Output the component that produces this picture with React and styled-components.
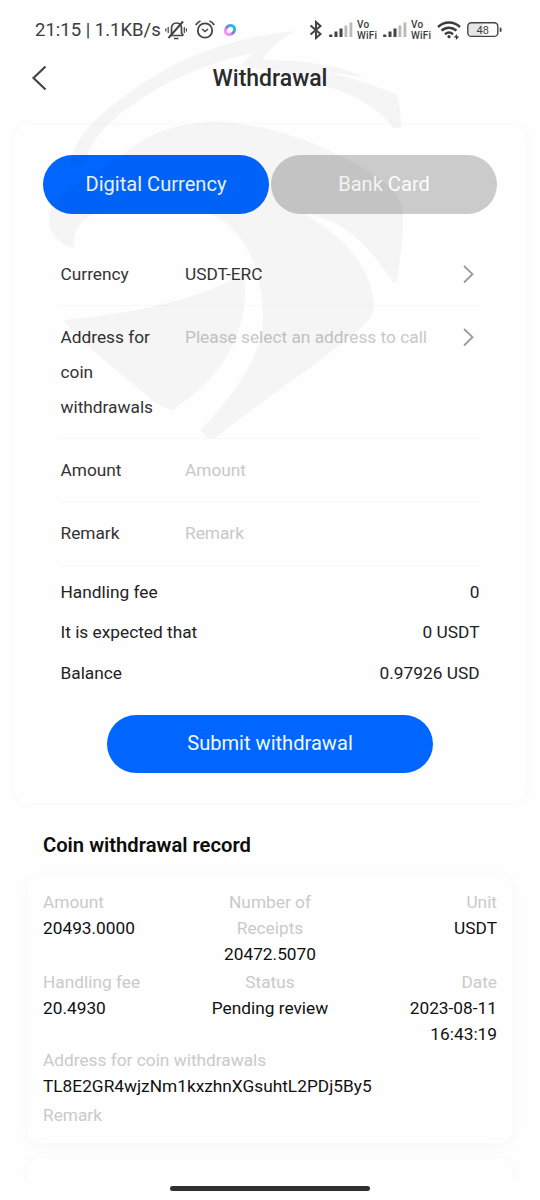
import styled, { createGlobalStyle } from 'styled-components'

const GlobalStyle = createGlobalStyle`
    * {
        box-sizing: border-box;
    }

    body {
        margin: 0;
        background: #fefefe;
        font-family: Roboto, "Liberation Sans", sans-serif;
        color: #111;
    }

    p, h1, h2 {
        margin: 0;
    }
`

const Screen = styled.div`
    position: relative;
    display: flex;
    flex-direction: column;
    width: 540px;
    height: 1200px;
    overflow: hidden;
`

const Watermark = styled.svg`
    position: absolute;
    top: 0;
    left: 0;
    pointer-events: none;
    fill: rgba(0, 0, 0, 0.036);
`

const StatusBar = styled.div`
    display: flex;
    align-items: center;
    flex: none;
    height: 58px;
    padding: 2px 38px 0 35px;
    color: #3c3c3c;

    svg {
        display: block;
        flex: none;
    }
`

const Clock = styled.span`
    width: 130px;
    font-size: 18.5px;
    white-space: nowrap;
`

const Notifications = styled.div`
    display: flex;
    align-items: center;
    gap: 8px;
`

const Indicators = styled.div`
    display: flex;
    align-items: center;
    margin-left: auto;

    svg:first-child {
        margin-right: 6px;
    }

    svg:last-child {
        margin-left: 6px;
    }
`

const VoWifi = styled.span`
    width: 21px;
    margin: 0 5px 0 4px;
    font-size: 10px;
    font-weight: 500;
    letter-spacing: 0.2px;
    line-height: 11px;
`

const Header = styled.header`
    display: grid;
    grid-template-columns: 60px 1fr 60px;
    align-items: center;
    flex: none;
    height: 40px;

    svg {
        margin-left: 30px;
    }
`

const Title = styled.h1`
    color: #2b2b2b;
    font-size: 23px;
    font-weight: 500;
    text-align: center;
`

const Card = styled.section`
    flex: none;
    height: 678px;
    margin: 27px 14px 0;
    padding: 30px 29px 0;
    border-radius: 14px;
    box-shadow: 0 0 10px rgba(0, 0, 0, 0.03);
`

const Tabs = styled.div`
    display: grid;
    grid-template-columns: 226px 226px;
    gap: 2px;
`

const Pill = styled.button`
    display: block;
    width: ${props => props.$width || '100%'};
    height: ${props => props.$height || '59px'};
    padding: 0 0 2px;
    border: 0;
    border-radius: 30px;
    background: ${props => props.$muted ? '#cbcbcb' : '#0066ff'};
    color: ${props => props.$muted ? '#fcfcfc' : '#effaff'};
    font-family: inherit;
    font-size: 20.1px;
`

const Form = styled.div`
    margin: 28px 17.5px 0;
`

const Field = styled.div`
    display: grid;
    grid-template-columns: 124.5px 1fr 18px;
    align-items: start;
    height: ${props => props.$height}px;
    padding-top: 14.4px;
    border-bottom: 1px solid #f7f7f7;
    font-size: 17.3px;
    line-height: 34.6px;

    &:first-child {
        padding-top: 15px;
    }

    svg {
        margin: 7px 0 0 0.5px;
    }
`

const Label = styled.span`
    width: 110px;
    color: #333;
`

const Value = styled.span`
    color: ${props => props.$empty ? '#c8c8c8' : '#333'};
    white-space: nowrap;
`

const Totals = styled.div`
    padding-top: 6px;
`

const Total = styled.div`
    display: flex;
    justify-content: space-between;
    height: 40.4px;
    color: #222;
    font-size: 17.3px;
    line-height: 40px;
`

const SubmitRow = styled.div`
    display: flex;
    justify-content: center;
    margin-top: 22.3px;
`

const RecordTitle = styled.h2`
    flex: none;
    height: 30px;
    margin: 27px 43px 0;
    color: #0c0c0c;
    font-size: 20.2px;
    font-weight: 600;
    line-height: 30px;
`

const Record = styled.section`
    flex: none;
    height: 268px;
    margin: 15px 28px 0;
    padding: 14px 15px 0;
    border-radius: 12px;
    background: #fefefe;
    box-shadow: 0 3px 16px rgba(0, 0, 0, 0.03);
    font-size: 17.3px;
    line-height: 26px;
`

const RecordGrid = styled.div`
    display: grid;
    grid-template-columns: 151px 152px 151px;
    row-gap: 2px;
`

const Cell = styled.div`
    padding: ${props => props.$align === 'center' ? '0 16px' : '0'};
    padding-left: ${props => props.$align === 'right' ? '50px' : ''};
    text-align: ${props => props.$align || 'left'};
`

const Caption = styled.p`
    color: #cacaca;
`

const Data = styled.p`
    color: #111;
`

const Remark = styled(Caption)`
    margin-top: 3px;
`

const HomeBar = styled.div`
    position: absolute;
    bottom: 0;
    left: 0;
    display: flex;
    justify-content: center;
    width: 100%;
    height: 22px;
    padding-top: 8px;
    background: #fefefe;

    &::after {
        content: "";
        width: 200px;
        height: 5px;
        border-radius: 3px;
        background: #303030;
    }
`

const SilentIcon = () => (
    <svg width="22" height="20" viewBox="0 0 22 20" fill="none" stroke="#444" strokeWidth="1.7">
        <path d="M5 15.500h13M6.500 15V8.500C6.500 5 8.500 3 11.500 3s5 2 5 5.500V13l2 2.500M9 18.500h4.500" />
        <path d="M3.500 18L18 1.500" strokeWidth="2" />
        <path d="M3.200 7v6M.8 8.500v3M19.300 7v6M21.400 8.500v3" strokeWidth="1.200" />
    </svg>
)

const AlarmIcon = () => (
    <svg width="20" height="20" viewBox="0 0 20 20" fill="none" stroke="#444" strokeWidth="1.8">
        <circle cx="10" cy="10.500" r="7.200" />
        <path d="M.8 5C2 3 3.500 1.700 5.500 1M19.200 5c-1.200-2-2.700-3.300-4.700-4" />
        <path d="M7 9l3 2.500L13 9" strokeWidth="1.500" />
    </svg>
)

const AppIcon = () => (
    <svg width="14" height="14" viewBox="0 0 14 14" fill="none" strokeWidth="3">
        <defs>
            <linearGradient id="ring" x1="0" y1="0" x2="1" y2="0">
                <stop offset="0.15" stopColor="#ff8df0" />
                <stop offset="0.5" stopColor="#8a6ff0" />
                <stop offset="0.85" stopColor="#25b8ea" />
            </linearGradient>
        </defs>
        <ellipse cx="7" cy="7" rx="5" ry="4.200" stroke="url(#ring)" transform="rotate(-45 7 7)" />
    </svg>
)

const BluetoothIcon = () => (
    <svg width="14" height="20" viewBox="0 0 14 20" fill="none" stroke="#444" strokeWidth="2">
        <path d="M1.500 5.500l10 8.500L7 18V2l4.500 4-10 8.500" />
    </svg>
)

const SignalIcon = () => (
    <svg width="24" height="16" viewBox="0 0 24 16" fill="#444">
        <rect x="0" y="12.500" width="3.500" height="2.500" rx="1" />
        <rect x="5.500" y="9.500" width="3" height="5.500" />
        <rect x="10.500" y="6.500" width="3" height="8.500" />
        <rect x="15.500" y="3.500" width="2.800" height="11.500" fill="#b9b9b9" />
        <rect x="20.500" y="0.500" width="2.800" height="14.500" fill="#b9b9b9" />
    </svg>
)

const WifiIcon = () => (
    <svg width="24" height="19" viewBox="0 0 24 19" fill="none" stroke="#3c3c3c" strokeWidth="2.4">
        <path d="M1 6C7.500 0 16.500 0 23 6M4.500 9.700c4.500-4 10.500-4 15 0M8 13.200c2.500-2 5.500-2 8 0" />
        <circle cx="12" cy="15.700" r="1.600" fill="#3c3c3c" stroke="none" />
        <path d="M17.500 16.500l2-2v3l2-2" strokeWidth="1.200" />
    </svg>
)

const BatteryIcon = () => (
    <svg width="35" height="16" viewBox="0 0 35 16">
        <rect x="1" y="1" width="15" height="13" rx="3" fill="#e6e6e6" />
        <rect x="0.800" y="0.800" width="30" height="13.600" rx="3.500" fill="none" stroke="#444" strokeWidth="1.400" />
        <rect x="32.700" y="5.500" width="1.800" height="4.500" rx="0.900" fill="#444" />
        <text x="15.800" y="11.500" fill="#444" fontSize="11" textAnchor="middle">48</text>
    </svg>
)

const BackIcon = () => (
    <svg width="18" height="26" viewBox="0 0 18 26" fill="none" stroke="#444" strokeWidth="2.2">
        <path d="M15.500 1.500L3.500 13l12 11.500" />
    </svg>
)

const Arrow = () => (
    <svg width="14" height="20" viewBox="0 0 14 20" fill="none" stroke="#999" strokeWidth="1.8">
        <path d="M2 2L10.500 10.200 2 18.500" />
    </svg>
)

// eagle: outer ring and crest, head, beak, neck
const Eagle = () => (
    <Watermark width="540" height="460" viewBox="0 0 540 460">
        <path d="M295 31C240 36 190 53 151 78C112 103 70 135 71 166H86C86 143 108 120 150 93C180 75 216 61 253 53L240 66C270 70 300 74 327 86C355 96 380 108 393 128H401C401 115 400 105 397 95C382 88 368 83 353 79L327 72L363 77C345 67 310 60 263 60C268 49 280 40 295 31Z" />
        <path d="M75 249C55 243 45 228 50 211C62 188 95 176 128 150C150 132 182 122 215 122C263 123 308 139 345 158C382 177 405 194 403 217C403 240 400 262 397 282H393C370 248 345 219 305 214C345 238 369 264 374 303Q374 313 369 320C340 349 290 380 215 438H207L200 430C235 395 263 354 263 317C262 265 243 227 208 213H100C82 218 71 228 75 249Z" />
        <path d="M63 320C125 314 190 303 244 274C252 335 218 380 173 410Q162 408 152 400C120 372 86 348 63 320Z" />
    </Watermark>
)

const fields = [
    { label: 'Currency', value: 'USDT-ERC', height: 64, arrow: true },
    { label: 'Address for coin withdrawals', placeholder: 'Please select an address to call', height: 133, arrow: true },
    { label: 'Amount', placeholder: 'Amount', height: 63 },
    { label: 'Remark', placeholder: 'Remark', height: 64 },
]

const totals = [
    ['Handling fee', '0'],
    ['It is expected that', '0 USDT'],
    ['Balance', '0.97926 USD'],
]

const record = [
    { caption: 'Amount', data: '20493.0000' },
    { caption: 'Number of Receipts', data: '20472.5070', align: 'center' },
    { caption: 'Unit', data: 'USDT', align: 'right' },
    { caption: 'Handling fee', data: '20.4930' },
    { caption: 'Status', data: 'Pending review', align: 'center' },
    { caption: 'Date', data: '2023-08-11 16:43:19', align: 'right' },
]

const App = () => {
    return (
        <>
            <GlobalStyle />
            <Screen>
                <StatusBar>
                    <Clock>21:15 | 1.1KB/s</Clock>
                    <Notifications>
                        <SilentIcon />
                        <AlarmIcon />
                        <AppIcon />
                    </Notifications>
                    <Indicators>
                        <BluetoothIcon />
                        <SignalIcon />
                        <VoWifi>Vo<br />WiFi</VoWifi>
                        <SignalIcon />
                        <VoWifi>Vo<br />WiFi</VoWifi>
                        <WifiIcon />
                        <BatteryIcon />
                    </Indicators>
                </StatusBar>

                <Header>
                    <BackIcon />
                    <Title>Withdrawal</Title>
                </Header>

                <Card>
                    <Tabs>
                        <Pill>Digital Currency</Pill>
                        <Pill $muted>Bank Card</Pill>
                    </Tabs>
                    <Form>
                        {fields.map(field => (
                            <Field key={field.label} $height={field.height}>
                                <Label>{field.label}</Label>
                                <Value $empty={!field.value}>{field.value || field.placeholder}</Value>
                                {field.arrow && <Arrow />}
                            </Field>
                        ))}
                        <Totals>
                            {totals.map(([label, value]) => (
                                <Total key={label}>
                                    <span>{label}</span>
                                    <span>{value}</span>
                                </Total>
                            ))}
                        </Totals>
                    </Form>
                    <SubmitRow>
                        <Pill $width="326px" $height="57.5px">Submit withdrawal</Pill>
                    </SubmitRow>
                </Card>

                <RecordTitle>Coin withdrawal record</RecordTitle>
                <Record>
                    <RecordGrid>
                        {record.map(item => (
                            <Cell key={item.caption} $align={item.align}>
                                <Caption>{item.caption}</Caption>
                                <Data>{item.data}</Data>
                            </Cell>
                        ))}
                    </RecordGrid>
                    <Caption>Address for coin withdrawals</Caption>
                    <Data>TL8E2GR4wjzNm1kxzhnXGsuhtL2PDj5By5</Data>
                    <Remark>Remark</Remark>
                </Record>
                <Record />

                <HomeBar />
                <Eagle />
            </Screen>
        </>
    )
}

export default App
